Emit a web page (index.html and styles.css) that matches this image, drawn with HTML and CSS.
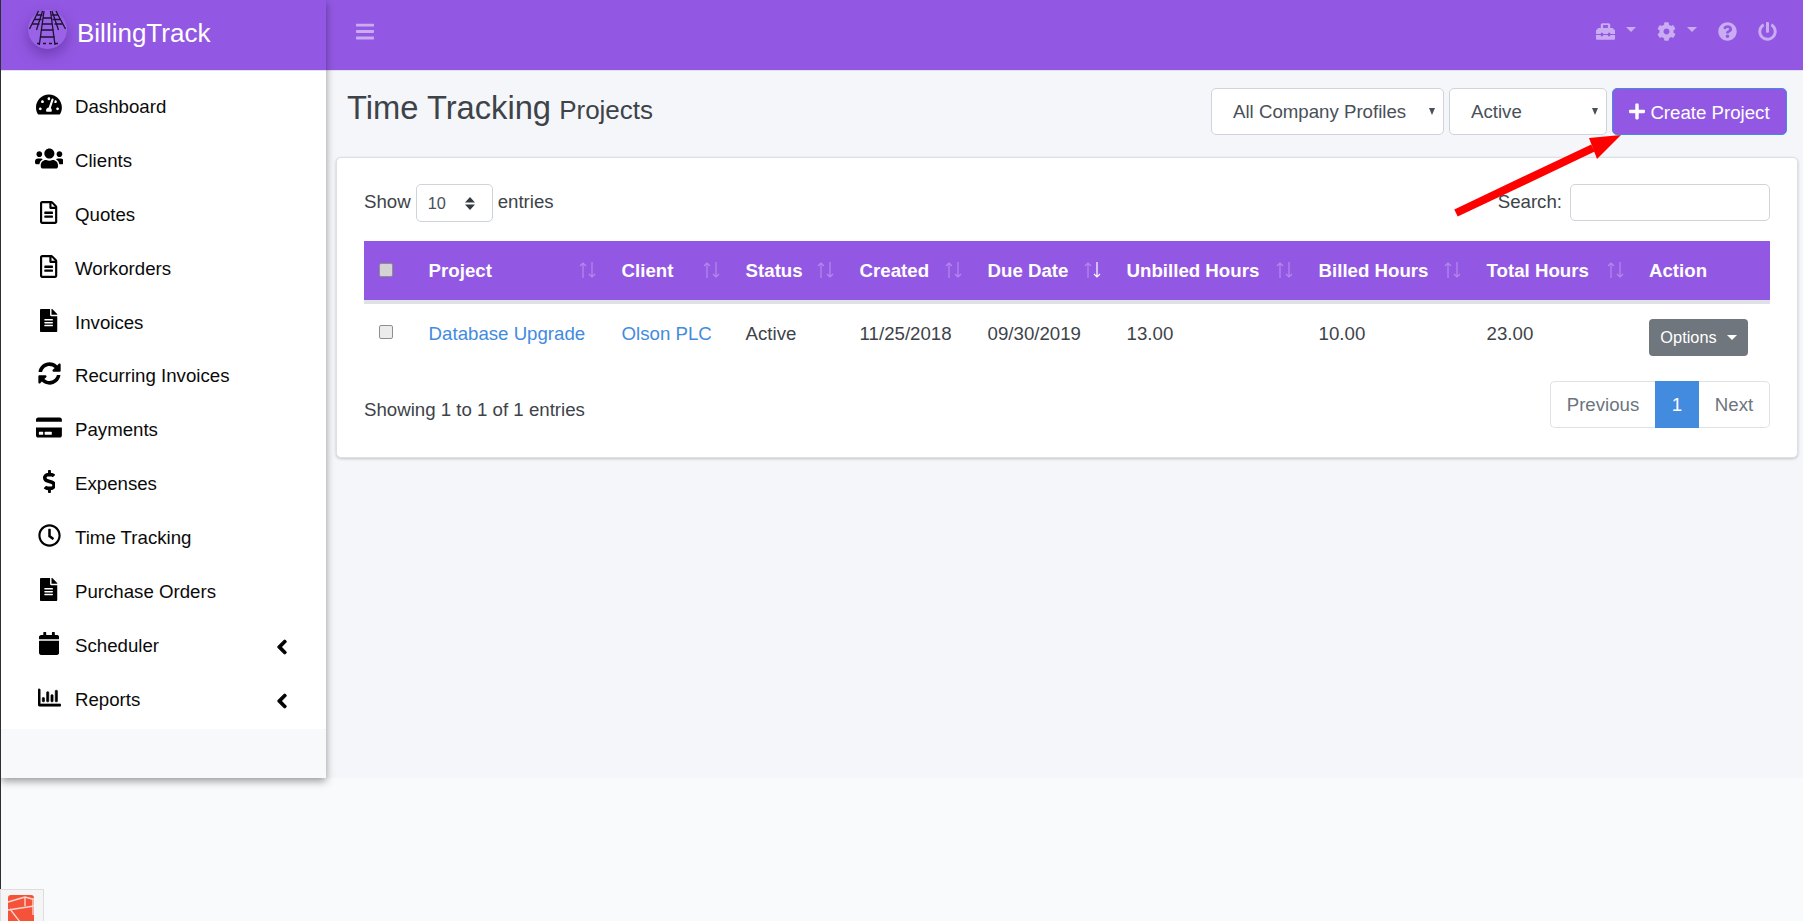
FILE: index.html
```html
<!DOCTYPE html>
<html lang="en">
<head>
<meta charset="utf-8">
<title>BillingTrack - Time Tracking</title>
<link rel="stylesheet" href="styles.css">
</head>
<body>
<div class="app">
  <aside class="sidebar">
    <div class="brand">
      <svg class="logo" viewBox="0 0 39 39" aria-hidden="true">
        <g class="rail">
          <path d="M16 1 L11.3 35 M22.5 1 L27 35 M14.6 8 H24 M13.8 14 H24.8 M12.8 20 H25.8 M11.8 27 H26.8"/>
          <path d="M10.5 1 L1.5 19 M14.5 1 L8.5 20 M9 5 H14.5 M6.6 9.5 H13.5 M4.4 14 H11.5"/>
          <path d="M28 1 L37.5 19 M24 1 L30.5 20 M23.5 5 H30 M24.5 9.5 H32.4 M26.5 14 H34.6"/>
          <path class="rail-dots" d="M9 33.5 H30"/>
        </g>
      </svg>
      <span class="brand-name">BillingTrack</span>
    </div>
    <nav class="menu">
      <a class="menu-item"><span class="menu-icon"><svg class="ico" viewBox="0 0 576 512"><path d="M288 32C128.94 32 0 160.94 0 320c0 52.8 14.25 102.26 39.06 144.8 5.61 9.62 16.3 15.2 27.44 15.2h443c11.14 0 21.83-5.58 27.44-15.2C561.75 422.26 576 372.8 576 320c0-159.06-128.94-288-288-288zm0 64c14.71 0 26.58 10.13 30.32 23.65-1.11 2.26-2.64 4.23-3.45 6.67l-9.22 27.67c-5.13 3.49-10.97 6.01-17.64 6.01-17.67 0-32-14.33-32-32S270.33 96 288 96zM96 384c-17.67 0-32-14.33-32-32s14.33-32 32-32 32 14.33 32 32-14.33 32-32 32zm48-160c-17.67 0-32-14.33-32-32s14.33-32 32-32 32 14.33 32 32-14.33 32-32 32zm246.77-72.41l-61.33 184C343.13 347.33 352 364.54 352 384c0 11.72-3.38 22.55-8.88 32H232.88c-5.5-9.45-8.88-20.28-8.88-32 0-33.94 26.5-61.43 59.9-63.59l61.34-184.01c4.17-12.56 17.73-19.45 30.36-15.17 12.57 4.19 19.35 17.79 15.17 30.36zm14.66 57.2l15.52-46.55c3.47-1.29 7.13-2.23 11.05-2.23 17.67 0 32 14.33 32 32s-14.33 32-32 32c-11.38-.01-20.89-6.28-26.57-15.22zM480 384c-17.67 0-32-14.33-32-32s14.33-32 32-32 32 14.33 32 32-14.33 32-32 32z"/></svg></span>Dashboard</a>
      <a class="menu-item"><span class="menu-icon"><svg class="ico" viewBox="0 0 640 512"><path d="M96 224c35.3 0 64-28.7 64-64s-28.7-64-64-64-64 28.7-64 64 28.7 64 64 64zm448 0c35.3 0 64-28.7 64-64s-28.7-64-64-64-64 28.7-64 64 28.7 64 64 64zm32 32h-64c-17.6 0-33.5 7.1-45.1 18.6 40.3 22.1 68.9 62 75.1 109.4h66c17.7 0 32-14.3 32-32v-32c0-35.3-28.7-64-64-64zm-256 0c61.9 0 112-50.1 112-112S381.9 32 320 32 208 82.1 208 144s50.1 112 112 112zm76.8 32h-8.3c-20.8 10-43.9 16-68.5 16s-47.6-6-68.5-16h-8.3C179.6 288 128 339.6 128 403.2V432c0 26.5 21.5 48 48 48h288c26.5 0 48-21.5 48-48v-28.8c0-63.6-51.6-115.2-115.2-115.2zm-223.7-13.4C161.5 263.1 145.6 256 128 256H64c-35.3 0-64 28.7-64 64v32c0 17.7 14.3 32 32 32h65.9c6.3-47.4 34.9-87.3 75.2-109.4z"/></svg></span>Clients</a>
      <a class="menu-item"><span class="menu-icon"><svg class="ico" viewBox="0 0 384 512"><path d="M288 248v28c0 6.6-5.4 12-12 12H108c-6.6 0-12-5.4-12-12v-28c0-6.6 5.4-12 12-12h168c6.6 0 12 5.4 12 12zm-12 72H108c-6.6 0-12 5.4-12 12v28c0 6.6 5.4 12 12 12h168c6.6 0 12-5.4 12-12v-28c0-6.6-5.4-12-12-12zm108-188.1V464c0 26.5-21.5 48-48 48H48c-26.5 0-48-21.5-48-48V48C0 21.5 21.5 0 48 0h204.1C264.8 0 277 5.1 286 14.1L369.9 98c9 8.9 14.1 21.2 14.1 33.9zm-128-80V128h76.1L256 51.9zM336 464V176H232c-13.3 0-24-10.7-24-24V48H48v416h288z"/></svg></span>Quotes</a>
      <a class="menu-item"><span class="menu-icon"><svg class="ico" viewBox="0 0 384 512"><path d="M288 248v28c0 6.6-5.4 12-12 12H108c-6.6 0-12-5.4-12-12v-28c0-6.6 5.4-12 12-12h168c6.6 0 12 5.4 12 12zm-12 72H108c-6.6 0-12 5.4-12 12v28c0 6.6 5.4 12 12 12h168c6.6 0 12-5.4 12-12v-28c0-6.6-5.4-12-12-12zm108-188.1V464c0 26.5-21.5 48-48 48H48c-26.5 0-48-21.5-48-48V48C0 21.5 21.5 0 48 0h204.1C264.8 0 277 5.1 286 14.1L369.9 98c9 8.9 14.1 21.2 14.1 33.9zm-128-80V128h76.1L256 51.9zM336 464V176H232c-13.3 0-24-10.7-24-24V48H48v416h288z"/></svg></span>Workorders</a>
      <a class="menu-item"><span class="menu-icon"><svg class="ico" viewBox="0 0 384 512"><path d="M224 136V0H24C10.7 0 0 10.7 0 24v464c0 13.3 10.7 24 24 24h336c13.3 0 24-10.7 24-24V160H248c-13.2 0-24-10.8-24-24zm64 236c0 6.6-5.4 12-12 12H108c-6.6 0-12-5.4-12-12v-8c0-6.6 5.4-12 12-12h168c6.6 0 12 5.4 12 12v8zm0-64c0 6.6-5.4 12-12 12H108c-6.6 0-12-5.4-12-12v-8c0-6.6 5.4-12 12-12h168c6.6 0 12 5.4 12 12v8zm0-72v8c0 6.6-5.4 12-12 12H108c-6.6 0-12-5.4-12-12v-8c0-6.6 5.4-12 12-12h168c6.6 0 12 5.4 12 12zm96-114.1v6.1H256V0h6.1c6.4 0 12.5 2.5 17 7l97.9 98c4.5 4.5 7 10.6 7 16.9z"/></svg></span>Invoices</a>
      <a class="menu-item"><span class="menu-icon"><svg class="ico" viewBox="0 0 512 512"><path d="M370.72 133.28C339.458 104.008 298.888 87.962 255.848 88c-77.458.068-144.328 53.178-162.791 126.85-1.344 5.363-6.122 9.15-11.651 9.15H24.103c-7.498 0-13.194-6.807-11.807-14.176C33.933 94.924 134.813 8 256 8c66.448 0 126.791 26.136 171.315 68.685L463.03 40.97C478.149 25.851 504 36.559 504 57.941V192c0 13.255-10.745 24-24 24H345.941c-21.382 0-32.09-25.851-16.971-40.971l41.75-41.749zM32 296h134.059c21.382 0 32.09 25.851 16.971 40.971l-41.75 41.75c31.262 29.273 71.835 45.319 114.876 45.28 77.418-.07 144.315-53.144 162.787-126.849 1.344-5.363 6.122-9.15 11.651-9.15h57.304c7.498 0 13.194 6.807 11.807 14.176C478.067 417.076 377.187 504 256 504c-66.448 0-126.791-26.136-171.315-68.685L48.97 471.03C33.851 486.149 8 475.441 8 454.059V320c0-13.255 10.745-24 24-24z"/></svg></span>Recurring Invoices</a>
      <a class="menu-item"><span class="menu-icon"><svg class="ico" viewBox="0 0 576 512"><path d="M0 432c0 26.5 21.5 48 48 48h480c26.5 0 48-21.5 48-48V256H0v176zm192-68c0-6.6 5.4-12 12-12h136c6.6 0 12 5.4 12 12v40c0 6.6-5.4 12-12 12H204c-6.6 0-12-5.4-12-12v-40zm-128 0c0-6.6 5.4-12 12-12h72c6.6 0 12 5.4 12 12v40c0 6.6-5.4 12-12 12H76c-6.6 0-12-5.4-12-12v-40zM576 80v48H0V80c0-26.5 21.5-48 48-48h480c26.5 0 48 21.5 48 48z"/></svg></span>Payments</a>
      <a class="menu-item"><span class="menu-icon"><svg class="ico" viewBox="0 0 288 512"><path d="M209.2 233.4l-108-31.6C88.7 198.2 80 186.5 80 173.5c0-16.3 13.2-29.5 29.5-29.5h66.3c12.2 0 24.2 3.7 34.2 10.5 6.1 4.1 14.3 3.1 19.5-2l34.8-34c7.1-6.9 6.1-18.4-1.8-24.5C238 74.8 207.4 64.1 176 64V16c0-8.8-7.2-16-16-16h-32c-8.8 0-16 7.2-16 16v48h-2.5C45.8 64-5.4 118.7.5 183.6c4.2 46.1 39.4 83.6 83.8 96.6l102.5 30c12.5 3.7 21.2 15.3 21.2 28.3 0 16.3-13.2 29.5-29.5 29.5h-66.3C100 368 88 364.3 78 357.5c-6.1-4.1-14.3-3.1-19.5 2l-34.8 34c-7.1 6.9-6.1 18.4 1.8 24.5 24.5 19.2 55.1 29.9 86.5 30v48c0 8.8 7.2 16 16 16h32c8.8 0 16-7.2 16-16v-48.2c46.6-.9 90.3-28.6 105.7-72.7 21.5-61.6-14.6-124.8-72.5-141.7z"/></svg></span>Expenses</a>
      <a class="menu-item"><span class="menu-icon"><svg class="ico" viewBox="0 0 512 512"><path d="M256 8C119 8 8 119 8 256s111 248 248 248 248-111 248-248S393 8 256 8zm0 448c-110.5 0-200-89.5-200-200S145.5 56 256 56s200 89.5 200 200-89.5 200-200 200zm61.8-104.4l-84.9-61.7c-3.1-2.3-4.9-5.9-4.9-9.7V116c0-6.6 5.4-12 12-12h32c6.6 0 12 5.4 12 12v141.7l66.8 48.6c5.4 3.9 6.5 11.4 2.6 16.8L334.6 349c-3.9 5.3-11.4 6.5-16.8 2.6z"/></svg></span>Time Tracking</a>
      <a class="menu-item"><span class="menu-icon"><svg class="ico" viewBox="0 0 384 512"><path d="M224 136V0H24C10.7 0 0 10.7 0 24v464c0 13.3 10.7 24 24 24h336c13.3 0 24-10.7 24-24V160H248c-13.2 0-24-10.8-24-24zm64 236c0 6.6-5.4 12-12 12H108c-6.6 0-12-5.4-12-12v-8c0-6.6 5.4-12 12-12h168c6.6 0 12 5.4 12 12v8zm0-64c0 6.6-5.4 12-12 12H108c-6.6 0-12-5.4-12-12v-8c0-6.6 5.4-12 12-12h168c6.6 0 12 5.4 12 12v8zm0-72v8c0 6.6-5.4 12-12 12H108c-6.6 0-12-5.4-12-12v-8c0-6.6 5.4-12 12-12h168c6.6 0 12 5.4 12 12zm96-114.1v6.1H256V0h6.1c6.4 0 12.5 2.5 17 7l97.9 98c4.5 4.5 7 10.6 7 16.9z"/></svg></span>Purchase Orders</a>
      <a class="menu-item"><span class="menu-icon"><svg class="ico" viewBox="0 0 448 512"><path d="M12 192h424c6.6 0 12 5.4 12 12v260c0 26.5-21.5 48-48 48H48c-26.5 0-48-21.5-48-48V204c0-6.6 5.4-12 12-12zm436-44v-36c0-26.5-21.5-48-48-48h-48V12c0-6.6-5.4-12-12-12h-40c-6.6 0-12 5.4-12 12v52H160V12c0-6.6-5.4-12-12-12h-40c-6.6 0-12 5.4-12 12v52H48C21.5 64 0 85.5 0 112v36c0 6.6 5.4 12 12 12h424c6.6 0 12-5.4 12-12z"/></svg></span>Scheduler<svg class="chev" viewBox="0 0 320 512"><path d="M34.52 239.03L228.87 44.69c9.37-9.37 24.57-9.37 33.94 0l22.67 22.67c9.36 9.36 9.37 24.52.04 33.9L131.49 256l154.02 154.75c9.34 9.38 9.32 24.54-.04 33.9l-22.67 22.67c-9.37 9.37-24.57 9.37-33.94 0L34.52 272.97c-9.37-9.37-9.37-24.57 0-33.94z"/></svg></a>
      <a class="menu-item"><span class="menu-icon"><svg class="ico ico-bold" viewBox="0 0 512 512"><path d="M396.8 352h22.4c6.4 0 12.8-6.4 12.8-12.8V108.8c0-6.4-6.4-12.8-12.8-12.8h-22.4c-6.4 0-12.8 6.4-12.8 12.8v230.4c0 6.4 6.4 12.8 12.8 12.8zm-192 0h22.4c6.4 0 12.8-6.4 12.8-12.8V140.8c0-6.4-6.4-12.8-12.8-12.8h-22.4c-6.4 0-12.8 6.4-12.8 12.8v198.4c0 6.4 6.4 12.8 12.8 12.8zm96 0h22.4c6.4 0 12.8-6.4 12.8-12.8V204.8c0-6.4-6.4-12.8-12.8-12.8h-22.4c-6.4 0-12.8 6.4-12.8 12.8v134.4c0 6.4 6.4 12.8 12.8 12.8zM496 400H48V80c0-8.84-7.16-16-16-16H16C7.16 64 0 71.16 0 80v336c0 17.67 14.33 32 32 32h464c8.84 0 16-7.16 16-16v-16c0-8.84-7.16-16-16-16zm-387.2-48h22.4c6.4 0 12.8-6.4 12.8-12.8v-70.4c0-6.4-6.4-12.8-12.8-12.8h-22.4c-6.4 0-12.8 6.4-12.8 12.8v70.4c0 6.4 6.4 12.8 12.8 12.8z"/></svg></span>Reports<svg class="chev" viewBox="0 0 320 512"><path d="M34.52 239.03L228.87 44.69c9.37-9.37 24.57-9.37 33.94 0l22.67 22.67c9.36 9.36 9.37 24.52.04 33.9L131.49 256l154.02 154.75c9.34 9.38 9.32 24.54-.04 33.9l-22.67 22.67c-9.37 9.37-24.57 9.37-33.94 0L34.52 272.97c-9.37-9.37-9.37-24.57 0-33.94z"/></svg></a>
    </nav>
  </aside>

  <main class="main">
    <header class="topbar">
      <svg class="burger" viewBox="0 0 448 512"><path d="M16 132h416c8.837 0 16-7.163 16-16V76c0-8.837-7.163-16-16-16H16C7.163 60 0 67.163 0 76v40c0 8.837 7.163 16 16 16zm0 160h416c8.837 0 16-7.163 16-16v-40c0-8.837-7.163-16-16-16H16c-8.837 0-16 7.163-16 16v40c0 8.837 7.163 16 16 16zm0 160h416c8.837 0 16-7.163 16-16v-40c0-8.837-7.163-16-16-16H16c-8.837 0-16 7.163-16 16v40c0 8.837 7.163 16 16 16z"/></svg>
      <div class="top-icons">
        <span class="top-item"><svg class="top-ico" viewBox="0 0 512 512"><path d="M502.63 214.63l-45.25-45.25c-6-6-14.14-9.37-22.63-9.37H384V80c0-26.51-21.49-48-48-48H176c-26.51 0-48 21.49-48 48v80H77.25c-8.49 0-16.62 3.37-22.63 9.37L9.37 214.63c-6 6-9.37 14.14-9.37 22.63V320h128v-16c0-8.84 7.16-16 16-16h32c8.84 0 16 7.16 16 16v16h128v-16c0-8.84 7.16-16 16-16h32c8.84 0 16 7.16 16 16v16h128v-82.75c0-8.48-3.37-16.62-9.37-22.62zM320 160H192V80h128v80zm64 208c0 8.84-7.16 16-16 16h-32c-8.84 0-16-7.16-16-16v-16H192v16c0 8.84-7.16 16-16 16h-32c-8.84 0-16-7.16-16-16v-16H0v96c0 17.67 14.33 32 32 32h448c17.67 0 32-14.33 32-32v-96H384v16z"/></svg><i class="top-caret"></i></span>
        <span class="top-item"><svg class="top-ico" viewBox="0 0 512 512"><path d="M487.4 315.7l-42.6-24.6c4.3-23.2 4.3-47 0-70.2l42.6-24.6c4.9-2.8 7.1-8.6 5.5-14-11.1-35.6-30-67.8-54.7-94.6-3.8-4.1-10-5.1-14.8-2.3L380.8 110c-17.9-15.4-38.5-27.3-60.8-35.1V25.8c0-5.6-3.9-10.5-9.4-11.7-36.7-8.2-74.3-7.8-109.2 0-5.5 1.2-9.4 6.1-9.4 11.7V75c-22.2 7.9-42.8 19.8-60.8 35.1L88.7 85.5c-4.9-2.8-11-1.9-14.8 2.3-24.7 26.7-43.6 58.9-54.7 94.6-1.7 5.4.6 11.2 5.5 14L67.3 221c-4.3 23.2-4.3 47 0 70.2l-42.6 24.6c-4.9 2.8-7.1 8.6-5.5 14 11.1 35.6 30 67.8 54.7 94.6 3.8 4.1 10 5.1 14.8 2.3l42.6-24.6c17.9 15.4 38.5 27.3 60.8 35.1v49.2c0 5.6 3.9 10.5 9.4 11.7 36.7 8.2 74.3 7.8 109.2 0 5.5-1.2 9.4-6.1 9.4-11.7v-49.2c22.2-7.9 42.8-19.8 60.8-35.1l42.6 24.6c4.9 2.8 11 1.9 14.8-2.3 24.7-26.7 43.6-58.9 54.7-94.6 1.5-5.5-.7-11.3-5.6-14.1zM256 336c-44.1 0-80-35.9-80-80s35.9-80 80-80 80 35.9 80 80-35.9 80-80 80z"/></svg><i class="top-caret"></i></span>
        <svg class="top-ico" viewBox="0 0 512 512"><path d="M504 256c0 136.997-111.043 248-248 248S8 392.997 8 256C8 119.083 119.043 8 256 8s248 111.083 248 248zM262.655 90c-54.497 0-89.255 22.957-116.549 63.758-3.536 5.286-2.353 12.415 2.715 16.258l34.699 26.31c5.205 3.947 12.621 3.008 16.665-2.122 17.864-22.658 30.113-35.797 57.303-35.797 20.429 0 45.698 13.148 45.698 32.958 0 14.976-12.363 22.667-32.534 33.976C247.128 238.528 216 254.941 216 296v4c0 6.627 5.373 12 12 12h56c6.627 0 12-5.373 12-12v-1.333c0-28.462 83.186-29.647 83.186-106.667 0-58.002-60.165-102-116.531-102zM256 338c-25.365 0-46 20.635-46 46 0 25.364 20.635 46 46 46s46-20.636 46-46c0-25.365-20.635-46-46-46z"/></svg>
        <svg class="top-ico" viewBox="0 0 512 512"><path d="M400 54.1c63 45 104 118.6 104 201.9 0 136.8-110.8 247.7-247.5 248C120 504.3 8.2 393 8 256.4 7.9 173.1 48.9 99.3 111.8 54.2c11.7-8.3 28-4.8 35 7.7L162.6 90c5.9 10.5 3.1 23.8-6.6 31-41.5 30.8-68 79.6-68 134.9-.1 92.3 74.5 168.1 168 168.1 91.6 0 168.6-74.2 168-169.1-.3-51.8-24.7-101.8-68.1-134-9.7-7.2-12.4-20.5-6.5-30.9l15.8-28.1c7-12.4 23.2-16.1 34.8-7.8zM296 264V24c0-13.3-10.7-24-24-24h-32c-13.3 0-24 10.7-24 24v240c0 13.3 10.7 24 24 24h32c13.3 0 24-10.7 24-24z"/></svg>
      </div>
    </header>

    <section class="page-head">
      <h1 class="title">Time Tracking <small class="subtitle">Projects</small></h1>
      <div class="controls">
        <select class="filter filter-company"><option>All Company Profiles</option></select>
        <select class="filter filter-status"><option>Active</option></select>
        <button class="create" type="button"><svg class="plus" viewBox="0 0 448 512"><path d="M416 208H272V64c0-17.67-14.33-32-32-32h-32c-17.67 0-32 14.33-32 32v144H32c-17.67 0-32 14.33-32 32v32c0 17.67 14.33 32 32 32h144v144c0 17.67 14.33 32 32 32h32c17.67 0 32-14.33 32-32V304h144c17.67 0 32-14.33 32-32v-32c0-17.67-14.33-32-32-32z"/></svg><span class="create-label">Create Project</span></button>
      </div>
    </section>

    <section class="card">
      <div class="dt-top">
        <label class="dt-length">Show <select class="length"><option>10</option></select> entries</label>
        <label class="dt-search">Search: <input class="search" type="search"></label>
      </div>
      <table class="grid">
        <colgroup>
          <col class="c-check"><col class="c-project"><col class="c-client"><col class="c-status"><col class="c-created"><col class="c-due"><col class="c-unbilled"><col class="c-billed"><col class="c-total"><col class="c-action">
        </colgroup>
        <thead>
          <tr>
            <th class="cell-check"><input class="check" type="checkbox"></th>
            <th><div class="th-in">Project<svg class="sort" viewBox="0 0 17 16"><path class="faint" d="M4 16V1M1 4l3-3 3 3"/><path class="faint" d="M13 0v15M10 12l3 3 3-3"/></svg></div></th>
            <th><div class="th-in">Client<svg class="sort" viewBox="0 0 17 16"><path class="faint" d="M4 16V1M1 4l3-3 3 3"/><path class="faint" d="M13 0v15M10 12l3 3 3-3"/></svg></div></th>
            <th><div class="th-in">Status<svg class="sort" viewBox="0 0 17 16"><path class="faint" d="M4 16V1M1 4l3-3 3 3"/><path class="faint" d="M13 0v15M10 12l3 3 3-3"/></svg></div></th>
            <th><div class="th-in">Created<svg class="sort" viewBox="0 0 17 16"><path class="faint" d="M4 16V1M1 4l3-3 3 3"/><path class="faint" d="M13 0v15M10 12l3 3 3-3"/></svg></div></th>
            <th><div class="th-in">Due Date<svg class="sort" viewBox="0 0 17 16"><path class="faint" d="M4 16V1M1 4l3-3 3 3"/><path class="solid" d="M13 0v15M10 12l3 3 3-3"/></svg></div></th>
            <th><div class="th-in">Unbilled Hours<svg class="sort" viewBox="0 0 17 16"><path class="faint" d="M4 16V1M1 4l3-3 3 3"/><path class="faint" d="M13 0v15M10 12l3 3 3-3"/></svg></div></th>
            <th><div class="th-in">Billed Hours<svg class="sort" viewBox="0 0 17 16"><path class="faint" d="M4 16V1M1 4l3-3 3 3"/><path class="faint" d="M13 0v15M10 12l3 3 3-3"/></svg></div></th>
            <th><div class="th-in">Total Hours<svg class="sort" viewBox="0 0 17 16"><path class="faint" d="M4 16V1M1 4l3-3 3 3"/><path class="faint" d="M13 0v15M10 12l3 3 3-3"/></svg></div></th>
            <th class="th-action"><div class="th-in">Action</div></th>
          </tr>
        </thead>
        <tbody>
          <tr>
            <td class="cell-check"><input class="check check-row" type="checkbox"></td>
            <td><a class="link">Database Upgrade</a></td>
            <td><a class="link">Olson PLC</a></td>
            <td>Active</td>
            <td>11/25/2018</td>
            <td>09/30/2019</td>
            <td>13.00</td>
            <td>10.00</td>
            <td>23.00</td>
            <td class="cell-action"><button class="options" type="button">Options<i class="opt-caret"></i></button></td>
          </tr>
        </tbody>
      </table>
      <div class="dt-bottom">
        <div class="dt-info">Showing 1 to 1 of 1 entries</div>
        <div class="pager">
          <a class="page page-first">Previous</a>
          <a class="page page-on">1</a>
          <a class="page page-last">Next</a>
        </div>
      </div>
    </section>
  </main>
</div>

<svg class="arrow" viewBox="0 0 200 100" aria-hidden="true">
  <path class="arrow-line" d="M6 88 L143 23"/>
  <path class="arrow-head" d="M171 10 L139 13 L147 34 Z"/>
</svg>

<div class="debugbar">
  <svg class="laravel" viewBox="0 0 26 27" aria-hidden="true">
    <rect width="26" height="30" rx="3" class="lv-bg"/>
    <path class="lv-line" d="M17 2 L26 4.5 M17 2 L17 11 M0 15 L26 11 M2 14 L12 27 M25 3 L25 20 M17 2 L0 7"/>
  </svg>
</div>
```

FILE: styles.css
```css
* { box-sizing: border-box; }

html, body { height: 100%; }

body {
  margin: 0;
  background: #f8fafc;
  border-left: 1px solid #2f2f2f;
  font-family: "Liberation Sans", Arial, sans-serif;
  font-size: 18.67px;
  line-height: 27px;
  color: #3d4349;
  overflow: hidden;
}

.app {
  display: flex;
  height: 778px;
  background: #f4f6f9;
}

/* Sidebar */
.sidebar {
  flex: 0 0 325px;
  background: #f8f9fa;
  box-shadow: 0 3px 8px rgba(0, 0, 0, 0.4);
  z-index: 2;
}

.brand {
  display: flex;
  align-items: center;
  height: 71px;
  padding: 0 0 0 27px;
  background: #9358e3;
  border-bottom: 1px solid #dee2e6;
}

.logo {
  width: 39px;
  height: 39px;
  margin-top: -11px;
  border-radius: 50%;
  background: #9a63e6;
  box-shadow: 0 6px 14px rgba(40, 10, 90, 0.35);
  overflow: visible;
  flex: none;
}

.rail {
  fill: none;
  stroke: #1d1233;
  stroke-width: 1.3;
}

.rail-dots {
  stroke-dasharray: 3 3;
}

.brand-name {
  margin-left: 10px;
  margin-top: -4px;
  font-size: 26px;
  color: #fff;
}

.menu {
  height: 658px;
  padding-top: 8.6px;
  background: #fff;
}

.menu-item {
  display: flex;
  align-items: center;
  height: 53.9px;
  padding-left: 33px;
  color: #0b0b0b;
}

.menu-icon {
  display: flex;
  justify-content: center;
  flex: 0 0 30px;
  margin-right: 11px;
  margin-top: -4px;
}

.ico {
  display: block;
  height: 23px;
  fill: #000;
}

.ico-bold {
  stroke: #000;
  stroke-width: 14;
}

.chev {
  display: block;
  width: 10px;
  height: 16px;
  margin-left: auto;
  margin-right: 39px;
  margin-top: 3px;
  fill: #000;
  stroke: #000;
  stroke-width: 36;
}

/* Main column */
.main {
  flex: 1;
  min-width: 0;
}

.topbar {
  display: flex;
  align-items: center;
  justify-content: space-between;
  height: 71px;
  padding: 0 26px 7px 30px;
  background: #9358e3;
  border-bottom: 1px solid #dee2e6;
}

.burger {
  display: block;
  width: 18px;
  height: 21px;
  fill: rgba(255, 255, 255, 0.5);
}

.top-icons {
  display: flex;
  align-items: center;
  gap: 21px;
}

.top-item {
  display: flex;
  align-items: center;
  gap: 11px;
}

.top-ico {
  display: block;
  width: 19px;
  height: 19px;
  fill: rgba(255, 255, 255, 0.5);
}

.top-caret {
  display: block;
  margin-top: -4px;
  border-top: 5px solid rgba(255, 255, 255, 0.5);
  border-left: 5px solid transparent;
  border-right: 5px solid transparent;
}

.page-head {
  display: flex;
  align-items: flex-start;
  justify-content: space-between;
  height: 86px;
  padding: 17px 16px 0 21px;
}

.title {
  margin: 0;
  padding-top: 1px;
  font-size: 32.7px;
  font-weight: 400;
  line-height: 38px;
  color: #3d4349;
}

.subtitle {
  margin-left: -1px;
  font-size: 26px;
}

.controls {
  display: flex;
  gap: 5px;
}

.filter {
  appearance: none;
  height: 47px;
  padding: 0 0 0 21px;
  background: #fff url("data:image/svg+xml,%3Csvg xmlns='http://www.w3.org/2000/svg' viewBox='0 0 6 7'%3E%3Cpath fill='%23495057' d='M0 0h6L3 7z'/%3E%3C/svg%3E") no-repeat right 8px center / 6px 7px;
  border: 1px solid #ced4da;
  border-radius: 5px;
  font: inherit;
  color: #495057;
}

.filter-company { width: 233px; }
.filter-status { width: 158px; }

.create {
  display: flex;
  align-items: center;
  justify-content: center;
  gap: 5px;
  width: 175px;
  height: 47px;
  padding: 0;
  background: #9358e3;
  border: 1px solid #428bdf;
  border-radius: 5px;
  font: inherit;
  color: #fff;
}

.create-label {
  padding-top: 2px;
}

.plus {
  display: block;
  width: 16px;
  height: 19px;
  fill: #fff;
}

/* Card */
.card {
  height: 301px;
  margin: 0 5px 0 10px;
  padding: 26px 27px 0 27px;
  background: #fff;
  border: 1px solid #dde1e6;
  border-radius: 5px;
  box-shadow: 0 1px 3px rgba(0, 0, 0, 0.2);
}

.dt-top {
  display: flex;
  justify-content: space-between;
  align-items: flex-start;
  height: 38px;
}

.dt-length, .dt-search {
  display: flex;
  align-items: center;
  gap: 5px;
  margin-top: -3px;
}

.length {
  appearance: none;
  width: 77px;
  height: 38px;
  margin-top: 3px;
  padding: 0 0 0 11px;
  background: #fff url("data:image/svg+xml,%3Csvg xmlns='http://www.w3.org/2000/svg' viewBox='0 0 10 13'%3E%3Cpath fill='%23343a40' d='M5 0l5 5.5H0zM5 13L0 7.5h10z'/%3E%3C/svg%3E") no-repeat right 17px center / 10px 13px;
  border: 1px solid #ced4da;
  border-radius: 5px;
  font-family: inherit;
  font-size: 16.33px;
  color: #495057;
}

.dt-search { gap: 8px; }

.search {
  width: 200px;
  height: 37px;
  margin: 3px 0 0;
  background: #fff;
  border: 1px solid #ced4da;
  border-radius: 5px;
}

.grid {
  width: 1406px;
  margin-top: 19px;
  table-layout: fixed;
  border-collapse: separate;
  border-spacing: 0;
}

.c-check { width: 52px; }
.c-project { width: 193px; }
.c-client { width: 124px; }
.c-status { width: 114px; }
.c-created { width: 128px; }
.c-due { width: 139px; }
.c-unbilled { width: 192px; }
.c-billed { width: 168px; }
.c-total { width: 163px; }
.c-action { width: 133px; }

.grid th {
  height: 63px;
  padding: 0 13px 1px 12.6px;
  background: #9358e3;
  border-bottom: 4px solid #dee2e6;
  text-align: left;
  font-weight: 700;
  color: #fff;
}

.grid td {
  padding: 16px 12px 15px 12.6px;
  vertical-align: top;
}

.grid .cell-action {
  padding: 15px 12px 15px;
}

.grid .th-action {
  padding-left: 12px;
}

.th-in {
  display: flex;
  align-items: center;
  justify-content: space-between;
  white-space: nowrap;
}

.sort {
  display: block;
  flex: none;
  width: 17px;
  height: 16px;
  fill: none;
}

.faint {
  stroke: rgba(255, 255, 255, 0.3);
  stroke-width: 1.2;
}

.solid {
  stroke: #fff;
  stroke-width: 1.2;
}

.grid .cell-check {
  padding-left: 15px;
  padding-right: 0;
}

.check {
  appearance: none;
  display: block;
  width: 14px;
  height: 14px;
  margin: 0;
  background: #d4d4d4;
  border: 1px solid #8f8f8f;
  border-radius: 2px;
}

.check-row {
  margin-top: 5px;
  background: #ececec;
}

.link { color: #428bdf; }

.options {
  display: block;
  width: 99px;
  height: 37px;
  padding: 0;
  background: #6f767d;
  border: 0;
  border-radius: 4px;
  font-family: inherit;
  font-size: 16.33px;
  color: #fff;
}

.opt-caret {
  display: inline-block;
  margin-left: 10px;
  vertical-align: 3px;
  border-top: 5px solid #fff;
  border-left: 5px solid transparent;
  border-right: 5px solid transparent;
}

.dt-bottom {
  display: flex;
  justify-content: space-between;
  align-items: flex-start;
  margin-top: 10px;
}

.dt-info { padding-top: 15px; }

.pager {
  display: flex;
  height: 47px;
}

.page {
  display: flex;
  align-items: center;
  justify-content: center;
  background: #fff;
  border: 1px solid #dee2e6;
  color: #6c757d;
}

.page-first {
  width: 105px;
  border-right: 0;
  border-radius: 5px 0 0 5px;
}

.page-on {
  width: 44px;
  background: #428bdf;
  border-color: #428bdf;
  color: #fff;
}

.page-last {
  width: 71px;
  border-left: 0;
  border-radius: 0 5px 5px 0;
}

/* Annotation arrow laid over the page */
.arrow {
  position: absolute;
  left: 1450px;
  top: 125px;
  width: 200px;
  height: 100px;
  z-index: 5;
}

.arrow-line {
  fill: none;
  stroke: #ff0000;
  stroke-width: 8;
}

.arrow-head { fill: #ff0000; }

/* Debug bar tab fixed at the corner */
.debugbar {
  position: fixed;
  left: 0;
  bottom: 0;
  width: 44px;
  height: 32px;
  padding: 5px 0 0 7px;
  background: #f5f5f5;
  border: 1px solid #ddd;
  border-bottom: 0;
  overflow: hidden;
}

.laravel {
  display: block;
  width: 26px;
  height: 27px;
  overflow: visible;
}

.lv-bg { fill: #f4533a; }

.lv-line {
  fill: none;
  stroke: #fbd5cf;
  stroke-width: 1.4;
}
```
